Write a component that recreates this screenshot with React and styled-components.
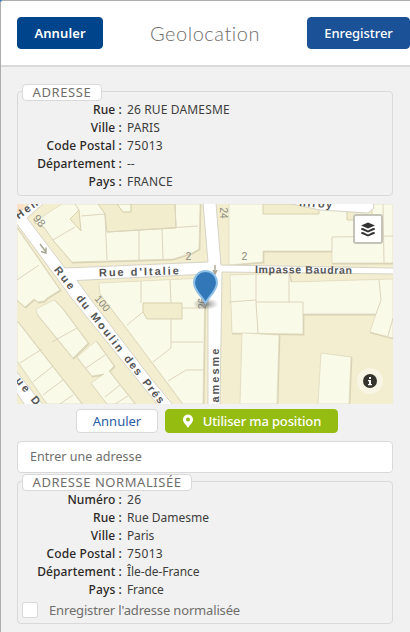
import React from "react";
import styled, { createGlobalStyle } from "styled-components";

const Global = createGlobalStyle`
  *, *::before, *::after { box-sizing: border-box; }
  body { margin: 0; background: #0a67c9; font-family: "Noto Sans", "Open Sans", sans-serif; overflow: hidden; }
  button, input { font: inherit; margin: 0; }
`;

const Modal = styled.div`
  width: 410px;
  height: 632px;
  overflow: hidden;
  background: #f1f1f1;
  border-left: 1px solid #adadad;
  border-top: 1px solid #adadad;
  border-top-left-radius: 3px;
`;

const Header = styled.header`
  display: flex;
  align-items: center;
  justify-content: space-between;
  height: 66px;
  padding-left: 16px;
  background: #fff;
  border-bottom: 2px solid #d9d9d9;
`;

const HeaderButton = styled.button`
  width: ${(p) => p.$width}px;
  height: 32px;
  padding: 0 0 1px;
  border: 1px solid ${(p) => p.$color};
  border-radius: 4px;
  background: ${(p) => p.$color};
  color: #fff;
  font-weight: ${(p) => p.$weight};
  font-size: 13px;
  letter-spacing: ${(p) => p.$spacing}px;
`;

const Title = styled.h1`
  margin: 0 0 1px;
  color: #706e6b;
  font-family: Lato, sans-serif;
  font-weight: 300;
  font-size: 20px;
  line-height: 26px;
  letter-spacing: 0.55px;
`;

const Content = styled.main`
  display: flex;
  flex-direction: column;
  padding: 17px 17px 0 16px;
`;

const Group = styled.section`
  display: flex;
  flex-direction: column;
  align-items: flex-start;
  height: ${(p) => p.$height}px;
  margin-top: ${(p) => p.$top}px;
  border: 1px solid #d9d9d9;
  border-radius: 4px;
`;

const Legend = styled.h2`
  width: ${(p) => p.$width}px;
  height: 17px;
  margin: -8px 0 0 4px;
  border: 1px solid #d9d9d9;
  border-radius: 4px;
  background: #fff;
  color: #706e6b;
  font-size: 13px;
  font-weight: 400;
  line-height: 15px;
  text-align: center;
  white-space: nowrap;
  letter-spacing: ${(p) => p.$spacing}px;
`;

const Row = styled.div`
  display: grid;
  grid-template-columns: 104px auto;
  column-gap: 5px;
  height: 18px;
  font-size: 12px;
  line-height: 18px;
  white-space: nowrap;
`;

const Label = styled.span`
  color: #2b2826;
  font-weight: 500;
  text-align: right;
  letter-spacing: 0.12px;
`;

const Value = styled.span`
  color: #3e3e3c;
  letter-spacing: ${(p) => p.$spacing || 0}px;
`;

const MapFrame = styled.div`
  height: 200px;
  margin-top: 8px;
  svg { display: block; }
`;

const Actions = styled.div`
  display: flex;
  gap: 7px;
  height: 24px;
  margin: 5px 0 8px 59px;
`;

const SmallButton = styled.button`
  display: flex;
  align-items: center;
  justify-content: center;
  gap: 9px;
  width: ${(p) => p.$width}px;
  height: 24px;
  padding: 0;
  border: 1px solid ${(p) => (p.$primary ? "#95bc11" : "#d9d9d9")};
  border-radius: 4px;
  background: ${(p) => (p.$primary ? "#95bc11" : "#fff")};
  color: ${(p) => (p.$primary ? "#fff" : "#2a5ca5")};
  font-size: 13px;
  font-weight: ${(p) => (p.$primary ? 500 : 400)};
  letter-spacing: ${(p) => (p.$primary ? -0.15 : 0)}px;
  line-height: 21px;
  white-space: nowrap;
`;

const AddressInput = styled.input`
  height: 32px;
  width: 100%;
  padding: 0 12px 2px;
  border: 1px solid #d9d9d9;
  border-radius: 4px;
  background: #fff;
  font-size: 12.5px;
  letter-spacing: 0.04px;
  &::placeholder { color: #706e6b; opacity: 1; }
`;

const CheckRow = styled.label`
  display: flex;
  align-items: center;
  gap: 11px;
  height: 18px;
  margin: 2px 0 0 4px;
  color: #706e6b;
  font-size: 13px;
  letter-spacing: -0.16px;
  white-space: nowrap;
`;

const CheckBox = styled.span`
  width: 16px;
  height: 16px;
  border: 1px solid #d9d9d9;
  border-radius: 2px;
  background: #fff;
`;

const buildings = [
  "62,204 34,222 44,227 53,240 72,262 173,259 192,253 199,249 200,204",
  "17,228 60,290 47,298 44,301 38,302 34,299 25,307 17,300",
  "36,309 54,300 62,308 88,343 73,358 37,314",
  "77,357 96,341 114,366 109,371 135,404 107,404 91,383 104,374 92,376",
  "17,321 82,404 47,404 20,365 17,361",
  "99,283 205,278 203,404 183,404 127,329 100,294",
  "229,204 393,204 393,263 332,263 332,251 263,251 263,262 229,265",
  "230,275 289,273 291,282 393,279 393,338 370,332 376,314 303,314 303,334 232,333",
  "242,333 279,335 277,404 240,404",
  "321,353 351,357 349,404 318,404",
];

const courts = [
  "98,204 105,214 107,232 176,228 175,204",
  "70,219 79,210 81,231",
  "143,303 182,303 182,319 147,319 143,312",
  "263,204 319,204 319,214 263,214",
  "347,210 372,210 372,220 347,220",
];

const walls =
  "M53 240L75 227M75 204L79 210M81 216L105 214L107 260M107 232L198 226M139 230V260M162 229L163 259M175 204L176 228" +
  "M17 280L39 265M52 342L77 328M86 368L105 355M105 397L120 385M115 404L128 396" +
  "M20 363L42 349M33 382L53 366M43 395L63 380M60 404L73 395" +
  "M141 281V303M170 280L171 303M127 325L143 312M182 308H203M171 319V348L153 362M171 342H203M168 381L186 370H203" +
  "M383 204L384 263M332 251V237L393 236M256 274V302M289 274V302M256 302L258 333M229 302L256 300M256 302H303V315M379 280L381 300L376 314M393 318L388 336";

const MapLabel = styled.text`
  font-family: "Liberation Sans", Arial, sans-serif;
  font-size: ${(p) => p.$size || 11}px;
  font-weight: ${(p) => (p.$light ? 400 : 700)};
  fill: ${(p) => (p.$light ? "#8c8b80" : "#555")};
`;

const moulin = [
  ["Rue", 0, 26],
  ["du", 36, 15],
  ["Moulin", 59, 46],
  ["des", 113, 22],
  ["Prés", 143, 28],
];

function StreetMap() {
  return (
    <svg width="376" height="200" viewBox="17 204 376 200">
      <defs>
        <radialGradient id="shade">
          <stop offset="0" stopColor="#555" stopOpacity=".7" />
          <stop offset="1" stopColor="#777" stopOpacity="0" />
        </radialGradient>
      </defs>
      <path d="M17 204H393V404H17Z" fill="#f2eecf" />
      <g strokeLinejoin="round">
        {buildings.map((d) => (
          <polygon key={d} points={d} fill="#d9d4b5" stroke="#d9d4b5" strokeWidth="1.4" transform="translate(.7 .7)" />
        ))}
        {buildings.map((d) => (
          <polygon key={d} points={d} fill="#fafae8" stroke="#dcd5ba" strokeWidth=".6" />
        ))}
        {courts.map((d) => (
          <polygon key={d} points={d} fill="#f1edcd" stroke="#d8d1b0" strokeWidth="1" />
        ))}
        <path d="M117 204L123 212H131V204Z" fill="#fafae8" stroke="#d3cba6" />
        <path d={walls} fill="none" stroke="#ddd4bd" strokeWidth="1" />
      </g>
      <g fill="#fff" stroke="#d6d3c6" strokeWidth="1">
        <path d="M17 372L43 405H25L16 392Z" />
        <path d="M287 203L320 210L368 213L374 208L373 203Z" />
        <path d="M16 216L30 203H44L27 218L65 268L208 262L203 203H216L221 265L394 268V274L222 272L220 405H208V274L77 280.5L92 301L150 377L173 405H158L73 300L16 223Z" />
      </g>
      <path d="M17 204H25L17 219Z" fill="#fae0c5" />
      <g stroke="#a7a591" strokeWidth="1.4" fill="none">
        <path d="M40 244L46 252M46 247.500V253L41 251.500" />
        <path d="M215 265V274M213 270L215 274L217 270" />
      </g>
      <MapLabel transform="translate(18.500 219.500) rotate(-36)" textLength="25">Hen</MapLabel>
      <MapLabel transform="translate(99 276.500) rotate(-1.500)" textLength="80">Rue d'Italie</MapLabel>
      <MapLabel transform="translate(255 273) rotate(.5)" textLength="97" $size={10.5}>Impasse Baudran</MapLabel>
      <g transform="translate(53.500 270) rotate(51.800)">
        {moulin.map(([word, x, length]) => (
          <MapLabel key={word} x={x} y="0" textLength={length}>{word}</MapLabel>
        ))}
      </g>
      <MapLabel transform="translate(218.500 402.500) rotate(-90)" textLength="54">amesme</MapLabel>
      <MapLabel transform="translate(15 381) rotate(51)" textLength="32">ue D</MapLabel>
      <MapLabel transform="translate(299 206) rotate(4)" textLength="33">nfroy</MapLabel>
      <MapLabel $light transform="translate(32.500 218.500) rotate(50)">98</MapLabel>
      <MapLabel $light transform="translate(94 299) rotate(50)" $size={10.5}>100</MapLabel>
      <MapLabel $light transform="translate(220 207.500) rotate(90)" $size={10}>24</MapLabel>
      <MapLabel $light x="185.500" y="260" $size={10.5}>2</MapLabel>
      <MapLabel $light x="241.500" y="259.500" $size={10.5}>2</MapLabel>
      <MapLabel $light transform="translate(205.500 309) rotate(-90)" $size={10}>26</MapLabel>
      <ellipse cx="205.500" cy="304" rx="13" ry="6" fill="url(#shade)" />
      <path d="M205.500 303C202 296 194 291 194 282.500A11.500 11.500 0 0 1 217 282.500C217 291 209 296 205.500 303Z" fill="#3278b9" stroke="#8ebfe6" strokeWidth="2" />
      <rect x="354" y="215" width="28" height="28" rx="2" fill="#fff" stroke="#c4c3b8" strokeWidth="2" />
      <g fill="#333">
        <path d="M361 225.500L368 222.500L375 225.500L368 228.500Z" />
        <path d="M361 228.500L363 228L368 230.500L373 228L375 228.500V229.500L368 232.500L361 229.500ZM361 232.500L363 232L368 234.500L373 232L375 232.500V233.500L368 236.500L361 233.500Z" />
      </g>
      <circle cx="370" cy="381" r="13" fill="#f8f5e4" />
      <circle cx="370" cy="381" r="7" fill="#36352d" />
      <path d="M369 377H371V379H369ZM368 380H371V384H372V385.300H368V384H369V381.200H368Z" fill="#fff" />
    </svg>
  );
}

const PinIcon = () => (
  <svg width="12" height="14" viewBox="0 0 12 14">
    <path fillRule="evenodd" fill="#fff" d="M6 .5A5 5 0 0 0 1 5.500C1 9 4.500 11 5.400 13.200Q6 14 6.600 13.200C7.500 11 11 9 11 5.500A5 5 0 0 0 6 .5ZM6 3.600A2 2 0 1 1 6 7.600A2 2 0 0 1 6 3.600Z" />
  </svg>
);

const address = [
  ["Rue", "26 RUE DAMESME", 0.14],
  ["Ville", "PARIS", 0.1],
  ["Code Postal", "75013", 0.35],
  ["Département", "--"],
  ["Pays", "FRANCE", 0.2],
];

const normalized = [
  ["Numéro", "26", 0.3],
  ["Rue", "Rue Damesme"],
  ["Ville", "Paris", -0.15],
  ["Code Postal", "75013", 0.35],
  ["Département", "Île-de-France", -0.08],
  ["Pays", "France", -0.15],
];

const Rows = ({ items }) =>
  items.map(([label, value, spacing]) => (
    <Row key={label}>
      <Label>{label} :</Label>
      <Value $spacing={spacing}>{value}</Value>
    </Row>
  ));

export default function App() {
  return (
    <>
      <Global />
      <Modal>
        <Header>
          <HeaderButton $width={86} $color="#00458b" $weight={600} $spacing={0.1}>Annuler</HeaderButton>
          <Title>Geolocation</Title>
          <HeaderButton $width={103} $color="#1b5297" $weight={500} $spacing={-0.05}>Enregistrer</HeaderButton>
        </Header>
        <Content>
          <Group $height={105} $top={7}>
            <Legend $width={80} $spacing={0.6}>ADRESSE</Legend>
            <Rows items={address} />
          </Group>
          <MapFrame><StreetMap /></MapFrame>
          <Actions>
            <SmallButton $width={82}>Annuler</SmallButton>
            <SmallButton $width={173} $primary><PinIcon />Utiliser ma position</SmallButton>
          </Actions>
          <AddressInput placeholder="Entrer une adresse" />
          <Group $height={143} $top={8}>
            <Legend $width={170} $spacing={0.55}>ADRESSE NORMALISÉE</Legend>
            <Rows items={normalized} />
            <CheckRow><CheckBox />Enregistrer l'adresse normalisée</CheckRow>
          </Group>
        </Content>
      </Modal>
    </>
  );
}
